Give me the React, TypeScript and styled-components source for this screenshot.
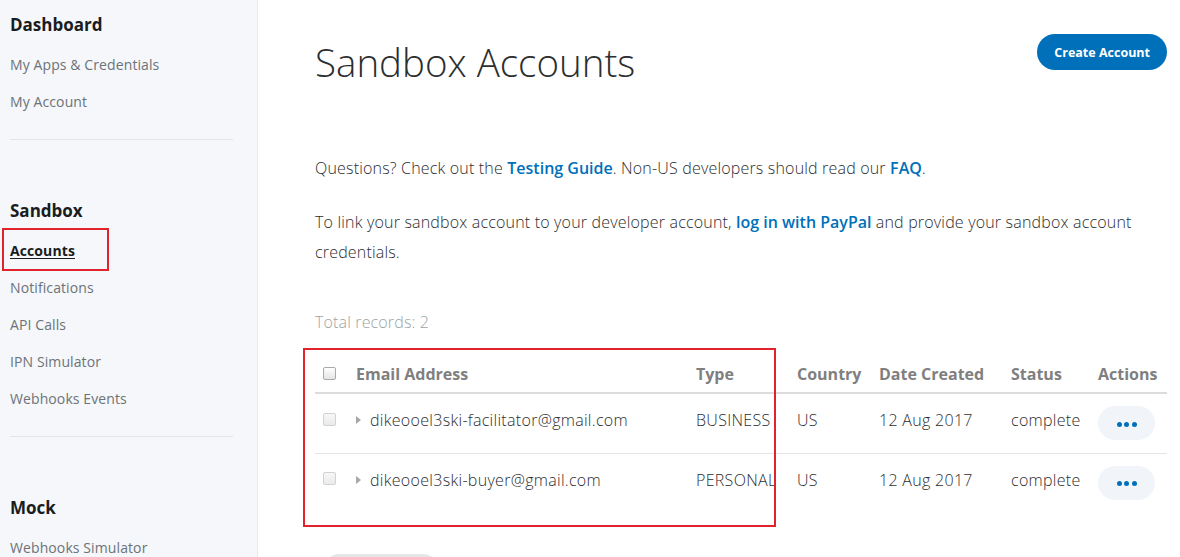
import styled, { createGlobalStyle } from "styled-components";

const GlobalStyle = createGlobalStyle`
  html, body {
    margin: 0;
    padding: 0;
    height: 100%;
    overflow: hidden;
    background: #fff;
    font-family: "Open Sans", "Noto Sans", Arial, sans-serif;
    color: #2c2e2f;
  }
  #root {
    height: 100%;
  }
`;

interface Account {
  email: string;
  type: string;
  country: string;
  created: string;
  status: string;
}

const accounts: Account[] = [
  {
    email: "dikeooel3ski-facilitator@gmail.com",
    type: "BUSINESS",
    country: "US",
    created: "12 Aug 2017",
    status: "complete",
  },
  {
    email: "dikeooel3ski-buyer@gmail.com",
    type: "PERSONAL",
    country: "US",
    created: "12 Aug 2017",
    status: "complete",
  },
];

const navSections = [
  { title: "Dashboard", items: ["My Apps & Credentials", "My Account"] },
  {
    title: "Sandbox",
    items: [
      "Accounts",
      "Notifications",
      "API Calls",
      "IPN Simulator",
      "Webhooks Events",
    ],
  },
  { title: "Mock", items: ["Webhooks Simulator"] },
];

const Page = styled.div`
  display: flex;
  min-height: 100%;
`;

const Sidebar = styled.nav`
  width: 247px;
  flex-shrink: 0;
  background: #f5f7fa;
  border-right: 1px solid #e6e9ee;
  padding: 5px 0 0 10px;
`;

const NavSection = styled.div``;

const NavTitle = styled.div`
  font-size: 17px;
  font-weight: 700;
  line-height: 40px;
  color: #1a1c1d;
  margin-bottom: 1px;
`;

const NavItem = styled.div<{ $active?: boolean }>`
  position: relative;
  font-size: 14px;
  line-height: 37px;
  letter-spacing: 0.1px;
  color: ${(p) => (p.$active ? "#1a1c1d" : "#6c7378")};
  font-weight: ${(p) => (p.$active ? 700 : 400)};

  span {
    text-decoration: ${(p) => (p.$active ? "underline" : "none")};
    text-underline-offset: 2px;
  }

  ${(p) =>
    p.$active &&
    `
    &::after {
      content: "";
      position: absolute;
      left: -8px;
      top: -4px;
      width: 103px;
      height: 39px;
      border: 2px solid #e3232c;
      pointer-events: none;
    }
  `}
`;

const NavDivider = styled.hr`
  border: none;
  border-top: 1px solid #e1e4e8;
  margin: 19px 24px 51px 0;
`;

const Main = styled.main`
  flex: 1;
  padding: 34px 13px 0 57px;
`;

const Header = styled.div`
  display: flex;
  justify-content: space-between;
  align-items: flex-start;
`;

const Title = styled.h1`
  margin: 4px 0 0;
  font-size: 38.5px;
  font-weight: 300;
  line-height: 48px;
  color: #2c2e2f;
`;

const PrimaryButton = styled.button`
  height: 36px;
  padding: 0 17px;
  border: none;
  border-radius: 18px;
  background: #0070ba;
  color: #fff;
  font-family: inherit;
  font-size: 12.5px;
  font-weight: 700;
`;

const Paragraph = styled.p<{ $gap: number }>`
  margin: ${(p) => p.$gap}px 0 0;
  font-size: 16px;
  font-weight: 300;
  line-height: 30px;
  letter-spacing: 0.18px;
  color: #2c2e2f;
  max-width: 840px;
`;

const Link = styled.a`
  color: #0070ba;
  font-weight: 600;
  letter-spacing: 0;
  text-decoration: none;
`;

const Records = styled.div`
  margin-top: 40px;
  font-size: 16px;
  font-weight: 300;
  line-height: 30px;
  letter-spacing: 0.15px;
  color: #9da3a6;
`;

const TableWrap = styled.div`
  position: relative;
  margin-top: 18px;

  &::after {
    content: "";
    position: absolute;
    left: -12px;
    top: -7px;
    width: 469px;
    height: 175px;
    border: 2px solid #e3232c;
    pointer-events: none;
  }
`;

const Table = styled.table`
  width: 100%;
  border-collapse: collapse;
  table-layout: fixed;
`;

const Th = styled.th<{ $w?: number }>`
  width: ${(p) => (p.$w ? `${p.$w}px` : "auto")};
  text-align: left;
  font-size: 16px;
  font-weight: 700;
  color: #7f7f7f;
  height: 37px;
  padding: 0;
  border-bottom: 2px solid #dcdcdc;
  white-space: nowrap;
`;

const Row = styled.tr`
  & + & td {
    border-top: 1px solid #e5e5e5;
  }
`;

const Td = styled.td<{ $top?: number }>`
  height: 60px;
  padding: ${(p) => p.$top ?? 14}px 0 0;
  vertical-align: top;
  font-size: 16px;
  font-weight: 300;
  line-height: 24px;
  letter-spacing: 0.3px;
  color: #2c2e2f;
  white-space: nowrap;
  box-sizing: border-box;
`;

const CheckCell = styled.div`
  display: flex;
  align-items: center;
  height: 24px;
  padding-left: 8px;
`;

const Checkbox = styled.span<{ $disabled?: boolean }>`
  display: inline-block;
  width: 11px;
  height: 11px;
  border-radius: 2px;
  border: 1px solid ${(p) => (p.$disabled ? "#d2d2d2" : "#a9a9a9")};
  background: ${(p) =>
    p.$disabled
      ? "linear-gradient(#f7f7f7, #ebebeb)"
      : "linear-gradient(#ffffff, #e4e4e4)"};
`;

const EmailCell = styled.div`
  display: flex;
  align-items: center;
  gap: 9px;
`;

const Caret = styled.span`
  width: 0;
  height: 0;
  border-top: 4px solid transparent;
  border-bottom: 4px solid transparent;
  border-left: 5px solid #a7a7a7;
`;

const ActionButton = styled.button`
  display: flex;
  align-items: center;
  justify-content: center;
  gap: 2.5px;
  width: 57px;
  height: 34px;
  border: none;
  border-radius: 17px;
  background: #f1f4f9;
  padding: 2px 0 0;
`;

const Dot = styled.span`
  width: 5px;
  height: 5px;
  border-radius: 50%;
  background: #0070ba;
`;

const MoreButton = styled.button`
  margin: 41px 0 0 7px;
  width: 118px;
  height: 36px;
  border: none;
  border-radius: 18px;
  background: #e6e6e6;
  font-family: inherit;
  font-size: 13px;
  color: #2c2e2f;
`;

export default function App() {
  return (
    <>
      <GlobalStyle />
      <Page>
        <Sidebar>
          {navSections.map((section, i) => (
            <NavSection key={section.title}>
              <NavTitle>{section.title}</NavTitle>
              {section.items.map((item) => (
                <NavItem key={item} $active={item === "Accounts"}>
                  <span>{item}</span>
                </NavItem>
              ))}
              {i < navSections.length - 1 && <NavDivider />}
            </NavSection>
          ))}
        </Sidebar>
        <Main>
          <Header>
            <Title>Sandbox Accounts</Title>
            <PrimaryButton>Create Account</PrimaryButton>
          </Header>
          <Paragraph $gap={67}>
            Questions? Check out the <Link>Testing Guide</Link>. Non-US
            developers should read our <Link>FAQ</Link>.
          </Paragraph>
          <Paragraph $gap={24}>
            To link your sandbox account to your developer account,{" "}
            <Link>log in with PayPal</Link> and provide your sandbox account
            credentials.
          </Paragraph>
          <Records>Total records: 2</Records>
          <TableWrap>
            <Table>
              <thead>
                <tr>
                  <Th $w={41}>
                    <CheckCell>
                      <Checkbox />
                    </CheckCell>
                  </Th>
                  <Th $w={340}>Email Address</Th>
                  <Th $w={101}>Type</Th>
                  <Th $w={82}>Country</Th>
                  <Th $w={132}>Date Created</Th>
                  <Th $w={87}>Status</Th>
                  <Th>Actions</Th>
                </tr>
              </thead>
              <tbody>
                {accounts.map((a) => (
                  <Row key={a.email}>
                    <Td $top={13}>
                      <CheckCell>
                        <Checkbox $disabled />
                      </CheckCell>
                    </Td>
                    <Td>
                      <EmailCell>
                        <Caret />
                        {a.email}
                      </EmailCell>
                    </Td>
                    <Td>{a.type}</Td>
                    <Td>{a.country}</Td>
                    <Td>{a.created}</Td>
                    <Td>{a.status}</Td>
                    <Td $top={12}>
                      <ActionButton aria-label="Actions">
                        <Dot />
                        <Dot />
                        <Dot />
                      </ActionButton>
                    </Td>
                  </Row>
                ))}
              </tbody>
            </Table>
          </TableWrap>
          <MoreButton>Load More</MoreButton>
        </Main>
      </Page>
    </>
  );
}
